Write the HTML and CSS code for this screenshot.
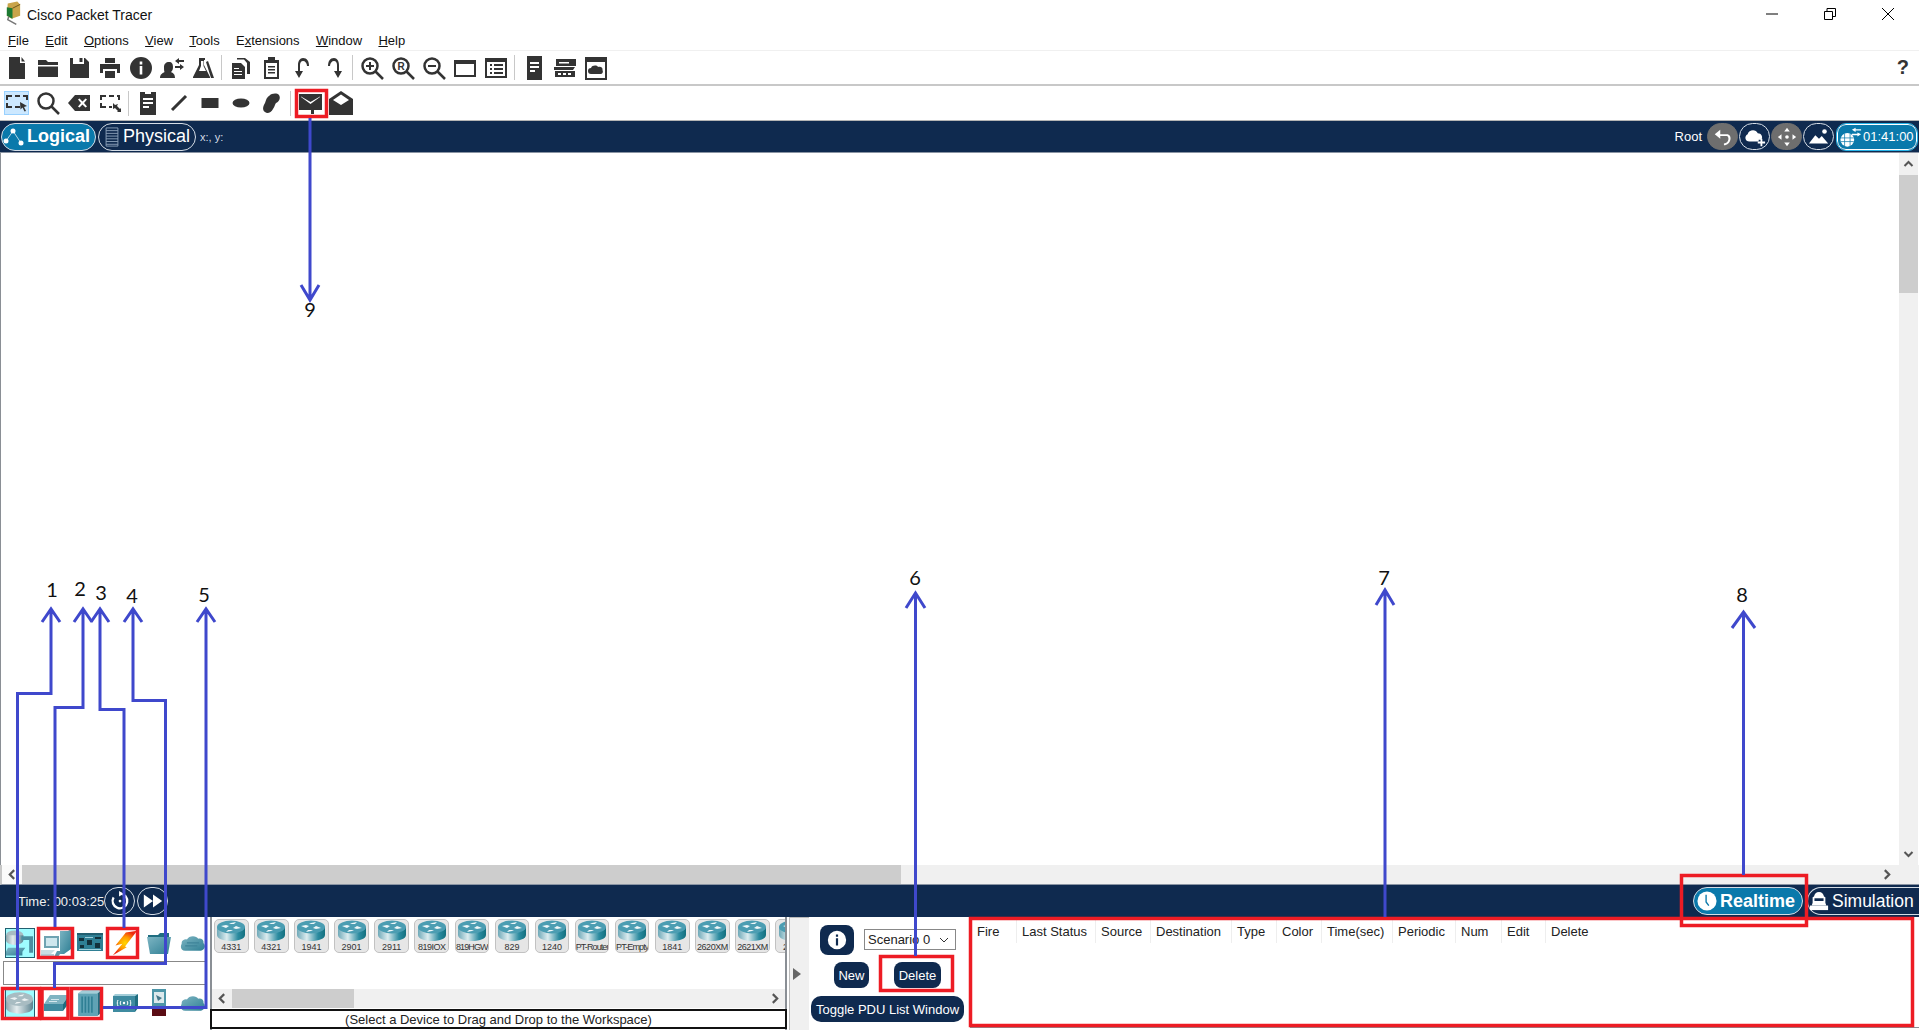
FILE: index.html
```html
<!DOCTYPE html>
<html lang="en">
<head>
    <meta charset="UTF-8">
    <title>Cisco Packet Tracer</title>
    <link rel="stylesheet" href="styles.css">
</head>
<body>
<svg class="defs" aria-hidden="true">
    <defs>
        <linearGradient id="rbody" x1="0" x2="1" y1="0" y2="0">
            <stop offset="0" stop-color="#6fa9b8"/>
            <stop offset=".35" stop-color="#dcecef"/>
            <stop offset=".75" stop-color="#2b8ba0"/>
            <stop offset="1" stop-color="#14707f"/>
        </linearGradient>
        <linearGradient id="rgrey" x1="0" x2="1" y1="0" y2="0">
            <stop offset="0" stop-color="#8fa6ad"/>
            <stop offset=".4" stop-color="#e4ecee"/>
            <stop offset="1" stop-color="#5d8390"/>
        </linearGradient>
        <linearGradient id="teal" x1="0" x2="1" y1="0" y2="1">
            <stop offset="0" stop-color="#7db5c3"/>
            <stop offset="1" stop-color="#2f7f94"/>
        </linearGradient>
        <radialGradient id="bolt">
            <stop offset="0" stop-color="#ffd800"/>
            <stop offset=".5" stop-color="#ff9a00"/>
            <stop offset="1" stop-color="#ee2a10"/>
        </radialGradient>
        <symbol id="i-doc" viewBox="0 0 24 24"><path d="M4 1h11v6h5v16H4z"/><path d="M16.500 1l3.500 4.500h-3.500z"/></symbol>
        <symbol id="i-folder" viewBox="0 0 24 24"><path d="M2 4h8l2 2h10v3H2zM2 10.500h20V21H2z"/></symbol>
        <symbol id="i-save" viewBox="0 0 24 24"><path d="M3 2h3v6h11V2h1l4 4v16H3z"/><path d="M12.500 2h3v4h-3z"/></symbol>
        <symbol id="i-print" viewBox="0 0 24 24"><path d="M7 2h10v5H7zM2 8h20v9h-3v-4H5v4H2zM7 15h10v7H7z"/></symbol>
        <symbol id="i-info" viewBox="0 0 24 24"><path fill-rule="evenodd" d="M12 1a11 11 0 1 1 0 22a11 11 0 0 1 0-22zM10.700 5.500v3h2.600v-3zM10.700 10v8.500h2.600V10z"/></symbol>
        <symbol id="i-user" viewBox="0 0 24 24"><path d="M9 6c3 0 4 2 4 5s-1 4-2 5c2 1 4 2 4 6H0c0-4 3-5 4.500-6C4 15 4 12 4 11c0-3 2-5 5-5z"/><path d="M15 5l4-3v2h5v2h-5v2zM24 11l-4-3v2h-5v2h5v2z"/></symbol>
        <symbol id="i-flask" viewBox="0 0 24 24"><path fill-rule="evenodd" d="M8 2h6v2h-1v5l6 12v1H2v-1L8 9V4zM10 5v5l-2 5h7l-2.500-5V5z"/><path d="M15 6l2-1 6 17h-3z"/></symbol>
        <symbol id="i-copy" viewBox="0 0 24 24"><path d="M8 3.500V2h8l5 4v12h-3V7l-3-3.500zM3 7h9l4 4v12H3zM5 12h5v1H5zM5 15h8v1H5zM5 18h8v1H5z" fill-rule="evenodd"/></symbol>
        <symbol id="i-paste" viewBox="0 0 24 24"><path fill-rule="evenodd" d="M8 1h7v3h4v19H4V4h4zM6 7v14h11V7zM8 10h7v1.500H8zM8 13h7v1.500H8zM8 16h7v1.500H8z"/></symbol>
        <symbol id="i-undo" viewBox="0 0 24 24"><path d="M16 10c0-3-2-5-4-5s-3 2-3 4v6h3l-4 7-4-7h3V9c0-4 2-7 5-7 4 0 6 3 6 8z"/></symbol>
        <symbol id="i-redo" viewBox="0 0 24 24"><path d="M8 10c0-3 2-5 4-5s3 2 3 4v6h-3l4 7 4-7h-3V9c0-4-2-7-5-7-4 0-6 3-6 8z"/></symbol>
        <symbol id="i-mag" viewBox="0 0 24 24"><circle cx="10" cy="10" r="7.500" fill="none" stroke="currentColor" stroke-width="2.500"/><path d="M15 15l8 8" stroke="currentColor" stroke-width="2.500"/></symbol>
        <symbol id="i-window" viewBox="0 0 24 24"><path fill-rule="evenodd" d="M1 4h22v17H1zM3 8v11h18V8z"/></symbol>
        <symbol id="i-list" viewBox="0 0 24 24"><path fill-rule="evenodd" d="M1 2h22v20H1zM3 6v14h18V6zM6 8h2v2H6zM10 8h9v2h-9zM6 12h2v2H6zM10 12h9v2h-9zM6 16h2v2H6zM10 16h9v2h-9z"/></symbol>
        <symbol id="i-server" viewBox="0 0 24 24"><path fill-rule="evenodd" d="M5 0h15v24H5zM8 6v2h9V6zM8 10v2h9v-2zM8 14v2h5v-2z"/></symbol>
        <symbol id="i-rack" viewBox="0 0 24 24"><path fill-rule="evenodd" d="M3 3h20v7H3zM6 6v1.500h10V6zM1 11h21l-2 3H1zM2 15h20v6H2zM5 17v2h3v-2zM10 17v2h3v-2zM15 17v2h3v-2z"/></symbol>
        <symbol id="i-cloudwin" viewBox="0 0 24 24"><path fill-rule="evenodd" d="M1 1h22v23H1zM3 6v16h18V6zM7 18a3 3 0 0 1 0-6c1-3 6-3 7-1 3-1 5 1 4.500 3 1 2 0 4-2 4z"/></symbol>
        <symbol id="i-marquee" viewBox="0 0 24 24"><path d="M1 4h6v2H1zM10 4h5v2h-5zM18 4h5v2h-5zM1 6h2v3H1zM21 6h2v3h-2zM1 12h2v3H1zM1 15h6v2H1zM10 15h5v2h-5z"/><path d="M15 11l7 4-3 1 2 4-1.500.500-2-4-2 2z"/></symbol>
        <symbol id="i-erase" viewBox="0 0 24 24"><path fill-rule="evenodd" d="M8 4h15v16H8l-7-8zM11 8.500l3 3.500-3 3.500 1.500 1 3-3 3 3 1.500-1-3-3.500 3-3.500-1.500-1-3 3-3-3z"/></symbol>
        <symbol id="i-resize" viewBox="0 0 24 24"><path d="M2 4h6v2H2zM11 4h5v2h-5zM19 4h3v5h-2V6h-1zM2 6h2v3H2zM2 12h2v3H2zM2 15h6v2H2zM11 15h3v2h-3z"/><path d="M15 12l2 2 3-1-1 2 3 3 1-1v4h-4l1-1-3-3-2 1z"/></symbol>
        <symbol id="i-note" viewBox="0 0 24 24"><path fill-rule="evenodd" d="M4 1h5v2h6V1h5v23H4zM7 7v2h10V7zM7 11v2h10v-2zM7 15v2h6v-2z"/></symbol>
        <symbol id="i-line" viewBox="0 0 24 24"><path d="M5 19L19 5" stroke="currentColor" stroke-width="3"/></symbol>
        <symbol id="i-rect" viewBox="0 0 24 24"><rect x="3.500" y="7" width="17" height="10"/></symbol>
        <symbol id="i-ellipse" viewBox="0 0 24 24"><ellipse cx="12" cy="12" rx="8.500" ry="4.500"/></symbol>
        <symbol id="i-pill" viewBox="0 0 24 24"><path d="M5 21c-3-2-2-6 0-9 1-2 1-5 4-7 3-3 8-3 10-1 2 3 0 7-3 8-1 1-1 3-3 6-2 4-6 5-8 3z"/></symbol>
        <symbol id="i-env" viewBox="0 0 24 24"><path fill-rule="evenodd" d="M1 3h23v16h-8v4h-3v-4H1zM3 6l9.500 7L22 6v-.500L12.500 11 3 5.500z"/></symbol>
        <symbol id="i-envopen" viewBox="0 0 24 24"><path fill-rule="evenodd" d="M12 0l12 8v16H0V8zM12 3.500L4 9l8 5 8-5z"/></symbol>
        <symbol id="i-router" viewBox="0 0 30 22">
            <path d="M1 7v8c0 3.500 6 6 14 6s14-2.500 14-6V7z" fill="url(#rbody)"/>
            <ellipse cx="15" cy="7" rx="14" ry="6.500" fill="#4b9db2"/>
            <path d="M5 6l5 2 3-2-3-1zM25 8l-5-2-3 2 3 1zM13 4l5 0 2-2-5 1zM17 10l-5 0-2 2 5-1z" fill="#eef7f9"/>
        </symbol>
        <symbol id="i-routergrey" viewBox="0 0 30 26">
            <path d="M1 9v9c0 3.500 6 6 14 6s14-2.500 14-6V9z" fill="url(#rgrey)"/>
            <ellipse cx="15" cy="9" rx="14" ry="7" fill="#a8bcc2"/>
            <path d="M5 8l5 2 3-2-3-1zM25 10l-5-2-3 2 3 1zM13 6l5 0 2-2-5 1zM17 12l-5 0-2 2 5-1z" fill="#eef3f4"/>
        </symbol>
        <symbol id="i-network" viewBox="0 0 30 30">
            <ellipse cx="10" cy="7" rx="9" ry="5" fill="#a8bcc2"/><path d="M1 7v5c0 3 4 5 9 5s9-2 9-5V7z" fill="url(#rgrey)"/>
            <path d="M17 8h12v17h-4V12H17z" fill="#4a8ea0"/>
            <path d="M3 20h18l-3 4H1zM1 24h17v4H1z" fill="url(#teal)"/>
        </symbol>
        <symbol id="i-pc" viewBox="0 0 32 30">
            <path d="M20 3h8l3-2v20l-7 5h-4z" fill="url(#teal)"/>
            <path d="M4 8h15v12H4z" fill="#6fa3b2"/><path d="M6 10h11v8H6z" fill="#cfe7ee"/>
            <path d="M1 22h14l-4 4H1z" fill="#c9dde2"/><path d="M1 26h13v2H1z" fill="#b0cdd5"/>
            <path d="M17 23h5l-4 6h-4z" fill="#5d9aab"/>
        </symbol>
        <symbol id="i-board" viewBox="0 0 26 20">
            <path d="M0 2h26v16H0z" fill="#2f7f94"/><path d="M0 0h26v2H0z" fill="#225f70"/>
            <path d="M10 7h5v5h-5zM2 5h5v3H2zM18 4h6v2h-6zM3 12h4v3H3zM18 10h5v5h-5z" fill="#12303a"/>
            <path d="M2 16h22v1H2zM8 4h8v1H8z" fill="#9fd0dc"/>
        </symbol>
        <symbol id="i-lightning" viewBox="0 0 30 30">
            <path d="M29 1L16 3 4 18l8-2L1 29l16-9-2-1z" fill="url(#bolt)"/>
        </symbol>
        <symbol id="i-fold" viewBox="0 0 26 24">
            <path d="M2 4h10l2-2h9v6H2z" fill="#1f6d80"/>
            <path d="M1 6h24l-3 17H4z" fill="url(#teal)"/>
        </symbol>
        <symbol id="i-cloudtext" viewBox="0 0 30 20">
            <path d="M6 19C1 19 0 14 2 11 1 7 6 5 8 6c2-5 11-5 13-1 4-1 7 2 6 5 4 4 0 9-4 9z" fill="url(#teal)"/>
            <path d="M8 9h14v1.500H8zM6 12.500h14V14H6z" fill="#3f8499"/>
        </symbol>
        <symbol id="i-switch" viewBox="0 0 26 18">
            <path d="M7 1h19l-6 9H1z" fill="#7fb4c2"/><path d="M1 10h19v7H1z" fill="#3f8ba0"/><path d="M20 10l6-9v8l-6 8z" fill="#1f6d80"/>
            <path d="M8 5h8v1H8zM6 7h8v1H6z" fill="#d4e8ee"/>
        </symbol>
        <symbol id="i-hub" viewBox="0 0 24 26">
            <path d="M1 4h18v21H1z" fill="#5fa3b5"/><path d="M1 4l4-3h18l-4 3z" fill="#a3cdd8"/><path d="M19 4l4-3v20l-4 4z" fill="#1f6d80"/>
            <path d="M4 7h1.500v15H4zM7 7h1.500v15H7zM10 7h1.500v15H10zM13 7h1.500v15H13z" fill="#2f7f94"/>
        </symbol>
        <symbol id="i-wireless" viewBox="0 0 26 20">
            <path d="M1 3h22v16H1z" fill="#3f8ba0"/><path d="M1 3l2-2h23l-3 2z" fill="#a3cdd8"/><path d="M23 3l3-2v14l-3 4z" fill="#1f6d80"/>
            <path d="M6 7c-1 2-1 4 0 6M9 8c-1 1-1 3 0 4M15 8c1 1 1 3 0 4M18 7c1 2 1 4 0 6" fill="none" stroke="#fff"/><circle cx="12" cy="10" r="1.200" fill="#fff"/>
        </symbol>
        <symbol id="i-phone" viewBox="0 0 16 30">
            <path d="M1 1h14v20H1z" fill="#4d96a8"/><path d="M3 4h10v11H3z" fill="#dce9ec"/><path d="M5 7l6 3-4 3z" fill="#46788a"/>
            <path d="M1 21h14v7H1z" fill="#5a0c14"/>
        </symbol>
        <symbol id="i-cloud" viewBox="0 0 30 20">
            <path d="M6 19C1 19 0 14 2 11 1 7 6 5 8 6c2-5 11-5 13-1 4-1 7 2 6 5 4 4 0 9-4 9z" fill="url(#teal)"/>
        </symbol>
    </defs>
</svg>

<header class="titlebar">
    <svg class="app-icon" viewBox="0 0 20 24">
        <path d="M5 2l10-2 3 3v12l-9 3-5-3z" fill="#c9a44a"/>
        <path d="M4 6l6 1v11l-6-3z" fill="#1d7a32"/>
        <path d="M10 7l8-4" stroke="#6b5418" fill="none"/>
        <path d="M6 16l-1 3 9 5" stroke="#777" stroke-width="1.500" fill="none"/>
    </svg>
    <span class="app-title">Cisco Packet Tracer</span>
    <div class="win-controls">
        <svg viewBox="0 0 12 12"><path d="M0 6h12" stroke="#000" fill="none"/></svg>
        <svg viewBox="0 0 12 12"><path d="M.5 3.500h8v8h-8zM3 3.500V.5h8.500v8H8.500" stroke="#000" fill="none"/></svg>
        <svg viewBox="0 0 12 12"><path d="M0 0l12 12M12 0L0 12" stroke="#000" fill="none"/></svg>
    </div>
</header>

<nav class="menubar">
    <span><u>F</u>ile</span>
    <span><u>E</u>dit</span>
    <span><u>O</u>ptions</span>
    <span><u>V</u>iew</span>
    <span><u>T</u>ools</span>
    <span>E<u>x</u>tensions</span>
    <span><u>W</u>indow</span>
    <span><u>H</u>elp</span>
</nav>

<div class="toolbar toolbar-main">
    <span class="tool"><svg><use href="#i-doc"/></svg></span>
    <span class="tool"><svg><use href="#i-folder"/></svg></span>
    <span class="tool"><svg><use href="#i-save"/></svg></span>
    <span class="tool"><svg><use href="#i-print"/></svg></span>
    <span class="tool"><svg><use href="#i-info"/></svg></span>
    <span class="tool"><svg><use href="#i-user"/></svg></span>
    <span class="tool"><svg><use href="#i-flask"/></svg></span>
    <span class="sep"></span>
    <span class="tool"><svg><use href="#i-copy"/></svg></span>
    <span class="tool"><svg><use href="#i-paste"/></svg></span>
    <span class="tool"><svg><use href="#i-undo"/></svg></span>
    <span class="tool"><svg><use href="#i-redo"/></svg></span>
    <span class="sep"></span>
    <span class="tool"><svg viewBox="0 0 24 24"><use href="#i-mag"/><path d="M6 9h8v2H6zM9 6h2v8H9z"/></svg></span>
    <span class="tool"><svg viewBox="0 0 24 24"><use href="#i-mag"/><text x="10" y="14" class="mag-r">R</text></svg></span>
    <span class="tool"><svg viewBox="0 0 24 24"><use href="#i-mag"/><path d="M6 9h8v2H6z"/></svg></span>
    <span class="tool"><svg><use href="#i-window"/></svg></span>
    <span class="tool"><svg><use href="#i-list"/></svg></span>
    <span class="sep"></span>
    <span class="tool"><svg><use href="#i-server"/></svg></span>
    <span class="tool"><svg><use href="#i-rack"/></svg></span>
    <span class="tool"><svg><use href="#i-cloudwin"/></svg></span>
    <span class="help">?</span>
</div>

<div class="toolbar toolbar-draw">
    <span class="tool is-active"><svg><use href="#i-marquee"/></svg></span>
    <span class="tool"><svg><use href="#i-mag"/></svg></span>
    <span class="tool"><svg><use href="#i-erase"/></svg></span>
    <span class="tool"><svg><use href="#i-resize"/></svg></span>
    <span class="sep"></span>
    <span class="tool"><svg><use href="#i-note"/></svg></span>
    <span class="tool"><svg><use href="#i-line"/></svg></span>
    <span class="tool"><svg><use href="#i-rect"/></svg></span>
    <span class="tool"><svg><use href="#i-ellipse"/></svg></span>
    <span class="tool"><svg><use href="#i-pill"/></svg></span>
    <span class="sep"></span>
    <span class="tool"><svg><use href="#i-env"/></svg></span>
    <span class="tool"><svg><use href="#i-envopen"/></svg></span>
</div>

<div class="navbar">
    <span class="pill pill-blue tab-logical">
        <svg class="pill-icon" viewBox="0 0 22 20"><path d="M10 4L3 14M10 4l8 12" stroke="#fff" stroke-width=".7" fill="none"/><circle cx="10" cy="4" r="2.500" fill="#fff"/><circle cx="3" cy="14" r="2.500" fill="#fff"/><circle cx="18" cy="16" r="2.500" fill="#fff"/></svg>
        <b>Logical</b>
    </span>
    <span class="pill tab-physical">
        <svg class="pill-icon" viewBox="0 0 20 22"><path d="M3.500 1h13v20h-13zM3.500 4h13M3.500 7h13M3.500 10h13M3.500 13h13M3.500 16h13M3.500 19h13" stroke="#8fa5bd" fill="none"/></svg>
        Physical
    </span>
    <span class="coords">x:, y:</span>
    <span class="nav-right">
        <span class="root-label">Root</span>
        <span class="round round-grey"><svg viewBox="0 0 24 24"><path d="M9 4L3 9l6 5v-3h7c3 0 3 8-3 8v2c8 0 10-12 3-12H9z" fill="#fff"/></svg></span>
        <span class="round"><svg viewBox="0 0 24 24"><path d="M6 17c-5 0-6-6-2-8 1-5 9-6 11-1 4 0 6 4 4 7h-3v2z" fill="#fff"/><path d="M18 14h2v3h3v2h-3v3h-2v-3h-3v-2h3z" fill="#fff"/></svg></span>
        <span class="round round-grey"><svg viewBox="0 0 24 24"><path d="M12 2l3 4H9zM12 22l-3-4h6zM2 12l4-3v6zM22 12l-4 3V9z" fill="#fff"/><circle cx="12" cy="12" r="2" fill="#fff"/></svg></span>
        <span class="round"><svg viewBox="0 0 24 24"><path d="M1 19l7-9 4 4 3-3 7 8z" fill="#fff"/><circle cx="18" cy="6" r="2.500" fill="#fff"/></svg></span>
        <span class="clock">
            <svg viewBox="0 0 24 24"><circle cx="8" cy="15" r="7.500" fill="#fff"/><path d="M1 13h14M1 17h14M5 8v14M11 8v14" stroke="#0a79ab" stroke-width=".8" fill="none"/><path d="M13 4l4-2v1.500h6v1.500h-6v1.500zM23 9l-4-2v1.500h-6V10h6v1.500z" fill="#fff"/></svg>
            01:41:00
        </span>
    </span>
</div>

<main class="workspace">
    <div class="canvas"></div>
    <div class="vscroll">
        <svg class="chev" viewBox="0 0 10 10"><path d="M1 7l4-4 4 4"/></svg>
        <div class="vthumb"></div>
        <svg class="chev chev-end" viewBox="0 0 10 10"><path d="M1 3l4 4 4-4"/></svg>
    </div>
</main>

<div class="hscroll">
    <svg class="chev" viewBox="0 0 10 10"><path d="M7 1L3 5l4 4"/></svg>
    <div class="hthumb"></div>
    <svg class="chev chev-right" viewBox="0 0 10 10"><path d="M3 1l4 4-4 4"/></svg>
</div>

<div class="simbar">
    <span class="time-label">Time: 00:03:25</span>
    <span class="round"><svg viewBox="0 0 24 24"><path d="M12 4a8 8 0 1 1-7 4" stroke="#fff" stroke-width="2.500" fill="none"/><path d="M11 1l5 3-5 3z" fill="#fff"/><circle cx="12" cy="12" r="1.500" fill="#fff"/></svg></span>
    <span class="round"><svg viewBox="0 0 24 24"><path d="M2 5l10 7-10 7zM12 5l10 7-10 7z" fill="#fff"/></svg></span>
    <span class="mode-switch">
        <span class="pill pill-blue mode-realtime">
            <svg class="mode-icon" viewBox="0 0 22 22"><circle cx="11" cy="11" r="10.500" fill="#fff"/><path d="M10 4v8l3 4" stroke="#0a79ab" stroke-width="1.500" fill="none"/></svg>
            <b>Realtime</b>
        </span>
        <span class="pill mode-sim">
            <svg class="mode-icon" viewBox="0 0 22 22"><path d="M11 1c3 0 5 2 5.500 5L18 7v6l1 3H3l1-3V7l1.500-1C6 3 8 1 11 1z" fill="#fff"/><path d="M6 8h10v3H6z" fill="#0f2a4f"/><path d="M1 16h20v5H1z" fill="#fff"/></svg>
            Simulation
        </span>
    </span>
</div>

<section class="bottom">
    <div class="palette">
        <div class="palette-row">
            <span class="cat cat-on"><svg><use href="#i-network"/></svg></span>
            <span class="cat cat-wide"><svg><use href="#i-pc"/></svg></span>
            <span class="cat"><svg><use href="#i-board"/></svg></span>
            <span class="cat"><svg><use href="#i-lightning"/></svg></span>
            <span class="cat"><svg><use href="#i-fold"/></svg></span>
            <span class="cat"><svg><use href="#i-cloudtext"/></svg></span>
        </div>
        <div class="palette-input"></div>
        <div class="palette-row">
            <span class="cat cat-on"><svg><use href="#i-routergrey"/></svg></span>
            <span class="cat"><svg><use href="#i-switch"/></svg></span>
            <span class="cat"><svg><use href="#i-hub"/></svg></span>
            <span class="cat"><svg><use href="#i-wireless"/></svg></span>
            <span class="cat"><svg><use href="#i-phone"/></svg></span>
            <span class="cat"><svg><use href="#i-cloud"/></svg></span>
        </div>
    </div>

    <div class="devices">
        <div class="device-list">
            <span class="tile"><svg><use href="#i-router"/></svg>4331</span>
            <span class="tile"><svg><use href="#i-router"/></svg>4321</span>
            <span class="tile"><svg><use href="#i-router"/></svg>1941</span>
            <span class="tile"><svg><use href="#i-router"/></svg>2901</span>
            <span class="tile"><svg><use href="#i-router"/></svg>2911</span>
            <span class="tile tile-tight"><svg><use href="#i-router"/></svg>819IOX</span>
            <span class="tile tile-tighter"><svg><use href="#i-router"/></svg>819HGW</span>
            <span class="tile"><svg><use href="#i-router"/></svg>829</span>
            <span class="tile"><svg><use href="#i-router"/></svg>1240</span>
            <span class="tile tile-tighter"><svg><use href="#i-router"/></svg>PT-Router</span>
            <span class="tile tile-tighter"><svg><use href="#i-router"/></svg>PT-Empty</span>
            <span class="tile"><svg><use href="#i-router"/></svg>1841</span>
            <span class="tile tile-tight"><svg><use href="#i-router"/></svg>2620XM</span>
            <span class="tile tile-tight"><svg><use href="#i-router"/></svg>2621XM</span>
            <span class="tile"><svg><use href="#i-router"/></svg>2811</span>
        </div>
        <div class="device-scroll">
            <svg class="chev" viewBox="0 0 10 10"><path d="M7 1L3 5l4 4"/></svg>
            <div class="device-thumb"></div>
            <svg class="chev chev-right" viewBox="0 0 10 10"><path d="M3 1l4 4-4 4"/></svg>
        </div>
        <div class="device-hint">(Select a Device to Drag and Drop to the Workspace)</div>
    </div>

    <div class="splitter"><span class="splitter-arrow"></span></div>

    <div class="pdu-controls">
        <div class="pdu-top">
            <span class="info-btn"><svg viewBox="0 0 24 24"><path fill="#fff" fill-rule="evenodd" d="M12 2a10 10 0 1 1 0 20a10 10 0 0 1 0-20zM10.800 6v2.500h2.400V6zM10.800 10v8h2.400v-8z"/></svg></span>
            <span class="scenario">Scenario 0<svg viewBox="0 0 10 10"><path d="M1 3l4 4 4-4" fill="none" stroke="#333"/></svg></span>
        </div>
        <div class="pdu-actions">
            <span class="btn btn-new">New</span>
            <span class="btn btn-delete">Delete</span>
        </div>
        <span class="btn btn-toggle">Toggle PDU List Window</span>
    </div>

    <div class="pdu-list">
        <div class="pdu-head">
            <span class="col-fire">Fire</span>
            <span class="col-status">Last Status</span>
            <span class="col-source">Source</span>
            <span class="col-dest">Destination</span>
            <span class="col-type">Type</span>
            <span class="col-color">Color</span>
            <span class="col-time">Time(sec)</span>
            <span class="col-periodic">Periodic</span>
            <span class="col-num">Num</span>
            <span class="col-edit">Edit</span>
            <span>Delete</span>
        </div>
    </div>
</section>

<!-- annotations drawn on top of the screenshot -->
<svg class="notes" viewBox="0 0 1919 1030">
    <g class="red">
        <rect x="296.500" y="90.500" width="30" height="26"/>
        <rect x="38.500" y="928.500" width="34" height="29"/>
        <rect x="107.500" y="928.500" width="30" height="29"/>
        <rect x="2.500" y="988.500" width="37" height="30"/>
        <rect x="42" y="988.500" width="26" height="30"/>
        <rect x="71.500" y="988.500" width="30" height="30"/>
        <rect x="880.500" y="956.500" width="72" height="34"/>
        <rect x="1681.500" y="875.500" width="125" height="50"/>
        <rect x="970.500" y="918.500" width="942" height="107"/>
    </g>
    <g class="blue">
        <path d="M310 118V300M301 285l9 15 9-15"/>
        <path d="M17.500 990V693.500H51V610M42 622l9-13 9 13"/>
        <path d="M55 927V707.500H83V610M74 622l9-13 9 13"/>
        <path d="M124 928V709.500H100V610M91 622l9-13 9 13"/>
        <path d="M54.500 988V963.500H165.500V700.500H133V610M124 622l9-13 9 13"/>
        <path d="M103 1007.500H206V610M197 622l9-13 9 13"/>
        <path d="M915.500 956V593M906 608l9.500-15 9.500 15"/>
        <path d="M1385 917V590M1376 605l9-15 9 15"/>
        <path d="M1743.500 875V612M1732 628l11.500-16 11.500 16"/>
    </g>
    <g class="note-labels">
        <text x="52" y="597">1</text>
        <text x="80" y="596">2</text>
        <text x="101" y="600">3</text>
        <text x="132" y="603">4</text>
        <text x="204" y="602">5</text>
        <text x="915" y="585">6</text>
        <text x="1384" y="585">7</text>
        <text x="1742" y="602">8</text>
        <text x="310" y="317">9</text>
    </g>
</svg>
</body>
</html>
```
FILE: styles.css
```css
html, body {
    margin: 0;
    height: 1030px;
    overflow: hidden;
    background-color: #fff;
}
body {
    position: relative;
    display: flex;
    flex-direction: column;
    font-family: "Liberation Sans", Arial, sans-serif;
    font-size: 13px;
    color: #222;
}
.defs {
    display: block;
    width: 0;
    height: 0;
    flex: none;
}

/* window chrome */
.titlebar {
    flex: none;
    height: 30px;
    display: flex;
    align-items: center;
    padding-left: 3px;
}
.app-icon {
    width: 19px;
    height: 24px;
    margin-top: -4px;
}
.app-title {
    font-size: 14px;
    color: #111;
    margin-left: 5px;
}
.win-controls {
    margin-left: auto;
    display: flex;
    gap: 46px;
    padding-right: 25px;
    margin-top: -2px;
}
.win-controls svg {
    width: 12px;
    height: 12px;
}
.menubar {
    flex: none;
    height: 21px;
    box-sizing: border-box;
    display: flex;
    gap: 16.300px;
    padding: 3px 0 0 8px;
    border-bottom: 1px solid #f0f0f0;
    color: #111;
}

/* toolbars */
.toolbar {
    flex: none;
    display: flex;
    align-items: center;
    box-sizing: border-box;
    padding-left: 1px;
    color: #333;
    fill: currentColor;
}
.toolbar-main {
    height: 35px;
    border-bottom: 2px solid #c8c8c8;
}
.toolbar-draw {
    height: 34px;
}
.tool {
    width: 31px;
    height: 24px;
    display: flex;
    align-items: center;
    justify-content: center;
}
.tool svg {
    width: 24px;
    height: 24px;
}
.tool.is-active {
    width: 25px;
    margin: 0 3px;
    background-color: #cce8ff;
    outline: 1px solid #99d1ff;
    outline-offset: -1px;
}
.mag-r {
    font-family: "Liberation Sans", sans-serif;
    font-size: 10px;
    font-weight: bold;
    text-anchor: middle;
}
.sep {
    width: 1px;
    height: 25px;
    margin: 0 3px;
    background-color: #c8c8c8;
}
.help {
    margin-left: auto;
    margin-right: 10px;
    font-size: 20px;
    font-weight: bold;
    color: #333;
}

/* navy bars */
.navbar, .simbar {
    flex: none;
    display: flex;
    align-items: center;
    box-sizing: border-box;
    background-color: #0f2a4f;
    color: #fff;
}
.navbar {
    height: 33px;
    border-top: 1px solid #b5b5b5;
    border-bottom: 1px solid #8a94a3;
    padding-left: 1px;
}
.pill {
    display: inline-flex;
    align-items: center;
    height: 28px;
    box-sizing: border-box;
    border: 1px solid #d5dde6;
    border-radius: 14px;
    background-color: #0f2a4f;
    font-size: 18px;
    color: #fff;
    white-space: nowrap;
}
.pill-blue {
    background-color: #0a79ab;
}
.pill-icon {
    width: 22px;
    height: 20px;
    flex: none;
}
.tab-logical {
    width: 95px;
    padding-left: 1px;
    gap: 2px;
}
.tab-physical {
    width: 98px;
    margin-left: 2px;
    padding-left: 3px;
    gap: 1px;
}
.tab-physical .pill-icon {
    width: 20px;
}
.coords {
    margin-left: 4px;
    font-size: 11px;
    color: #d5dde6;
}
.nav-right {
    margin-left: auto;
    display: flex;
    align-items: center;
    gap: 1px;
}
.root-label {
    margin-right: 4px;
}
.round {
    width: 31px;
    height: 27px;
    box-sizing: border-box;
    border: 1px solid #d5dde6;
    border-radius: 14px;
    display: flex;
    align-items: center;
    justify-content: center;
}
.round svg {
    width: 22px;
    height: 22px;
}
.round-grey {
    background-color: #6e6e6e;
    border-color: #6e6e6e;
}
.clock {
    width: 80px;
    height: 26px;
    box-sizing: border-box;
    margin: 0 2px;
    background-color: #0a79ab;
    border: 1px solid #fff;
    outline: 1px solid #27b4e8;
    border-radius: 9px;
    display: flex;
    align-items: center;
    gap: 1px;
    font-size: 13px;
    padding-left: 2px;
}
.clock svg {
    width: 22px;
    height: 22px;
    flex: none;
}

/* workspace */
.workspace {
    flex: 1;
    min-height: 0;
    display: flex;
    border-left: 1px solid #8a8f95;
}
.canvas {
    flex: 1;
}
.vscroll {
    width: 19px;
    margin-right: 1px;
    background-color: #f0f0f0;
    display: flex;
    flex-direction: column;
}
.vthumb {
    height: 118px;
    background-color: #cdcdcd;
}
.chev {
    flex: none;
    width: 19px;
    height: 22px;
    padding: 6px 4px;
    box-sizing: border-box;
}
.chev path {
    fill: none;
    stroke: #555;
    stroke-width: 2;
}
.chev-end {
    margin-top: auto;
}
.chev-right {
    margin-left: auto;
    margin-right: 22px;
}
.hscroll {
    flex: none;
    height: 20px;
    box-sizing: border-box;
    display: flex;
    align-items: center;
    background-color: #f0f0f0;
    border-bottom: 1px solid #8a94a3;
    border-left: 2px solid #c8c8c8;
}
.hscroll .chev {
    width: 20px;
    height: 19px;
    padding: 4px;
}
.hscroll .chev:first-child {
    background-color: #fafafa;
}
.hthumb {
    width: 879px;
    height: 19px;
    background-color: #cdcdcd;
}
.simbar {
    height: 32px;
    padding-left: 18px;
    gap: 2px;
}
.time-label {
    width: 84px;
    white-space: nowrap;
    color: #f0f0f0;
}
.simbar > .round {
    height: 28px;
}
.mode-switch {
    margin-left: auto;
    display: flex;
    gap: 4px;
}
.mode-realtime {
    width: 110px;
    padding-left: 3px;
    gap: 3px;
}
.mode-sim {
    width: 112px;
    padding-left: 1px;
    gap: 3px;
    border-right: 0;
    border-radius: 14px 0 0 14px;
    font-size: 17.500px;
}
.mode-icon {
    width: 20px;
    height: 20px;
    flex: none;
}

/* bottom panel */
.bottom {
    flex: none;
    height: 113px;
    display: flex;
}
.palette {
    width: 210px;
    flex: none;
    padding-top: 11px;
    box-sizing: border-box;
}
.palette-row {
    display: flex;
    height: 32px;
    padding-left: 5px;
}
.cat {
    width: 34.500px;
    height: 30px;
    display: flex;
    align-items: center;
    justify-content: center;
}
.cat svg {
    width: 26px;
    height: 30px;
}
.cat-on {
    width: 30px;
    margin-right: 4.500px;
    background-color: #9ffcff;
    box-shadow: inset 0 0 0 1px #225f70;
}
.cat-on svg {
    width: 29px;
}
.cat-wide svg {
    width: 32px;
    flex: none;
}
.palette-input {
    height: 22px;
    margin: 1px 3px 3px 3px;
    border: 1px solid #888;
    border-right: 0;
}
.devices {
    width: 577px;
    flex: none;
    display: flex;
    flex-direction: column;
    box-sizing: border-box;
    border-left: 2px solid #8a8f95;
    border-right: 2px solid #8a8f95;
}
.device-list {
    height: 72px;
    flex: none;
    display: flex;
    gap: 5.600px;
    padding: 2px 0 0 2px;
    box-sizing: border-box;
    overflow: hidden;
}
.tile {
    flex: none;
    width: 34.500px;
    height: 34px;
    box-sizing: border-box;
    display: flex;
    flex-direction: column;
    align-items: center;
    background-color: #e6e6e6;
    border: 1px solid #c2c2c2;
    border-radius: 5px;
    font-size: 9px;
    line-height: 10px;
    color: #333;
    white-space: nowrap;
    overflow: hidden;
}
.tile svg {
    flex: none;
    width: 30px;
    height: 22px;
}
.tile-tight {
    letter-spacing: -.5px;
}
.tile-tighter {
    letter-spacing: -.9px;
}
.device-scroll {
    height: 19px;
    flex: none;
    display: flex;
    align-items: center;
    background-color: #f0f0f0;
}
.device-scroll .chev {
    width: 20px;
    height: 19px;
    padding: 4px;
}
.device-scroll .chev-right {
    margin-right: 0;
}
.device-thumb {
    width: 122px;
    height: 19px;
    background-color: #cdcdcd;
}
.device-hint {
    height: 20px;
    box-sizing: border-box;
    margin: 1px -2px 0 -2px;
    border: 2px solid #111;
    text-align: center;
    line-height: 18px;
    color: #222;
}
.splitter {
    width: 20px;
    flex: none;
    box-sizing: border-box;
    margin-left: 2px;
    background-color: #f0f0f0;
    border-top: 1px solid #bbb;
    border-left: 1px solid #bbb;
    display: flex;
    align-items: center;
    padding-left: 3px;
}
.splitter-arrow {
    width: 0;
    height: 0;
    border-left: 8px solid #666;
    border-top: 6px solid transparent;
    border-bottom: 6px solid transparent;
}
.pdu-controls {
    width: 161px;
    flex: none;
    box-sizing: border-box;
    padding: 7px 0 0 2px;
    display: flex;
    flex-direction: column;
}
.pdu-top {
    display: flex;
    align-items: center;
    height: 31px;
    padding-left: 9px;
}
.info-btn {
    width: 34px;
    height: 30px;
    background-color: #0f2a4f;
    border-radius: 8px;
    display: flex;
    align-items: center;
    justify-content: center;
}
.info-btn svg {
    width: 22px;
    height: 22px;
}
.scenario {
    width: 92px;
    height: 21px;
    box-sizing: border-box;
    margin-left: 10px;
    border: 1px solid #888;
    padding-left: 3px;
    display: flex;
    align-items: center;
    justify-content: space-between;
    color: #222;
}
.scenario svg {
    width: 10px;
    height: 10px;
    margin-right: 6px;
}
.pdu-actions {
    display: flex;
    margin: 7px 0 8px 23px;
    gap: 25px;
}
.btn {
    height: 26px;
    border-radius: 8px;
    background-color: #0f2a4f;
    color: #fff;
    display: flex;
    align-items: center;
    justify-content: center;
    white-space: nowrap;
}
.btn-new {
    width: 35px;
}
.btn-delete {
    width: 47px;
}
.btn-toggle {
    width: 153px;
    border-radius: 10px;
}
.pdu-list {
    flex: 1;
    box-sizing: border-box;
    margin-bottom: 2px;
    border-bottom: 1px solid #8a8f95;
}
.pdu-head {
    display: flex;
    height: 26px;
    color: #222;
    line-height: 29px;
}
.pdu-head span {
    box-sizing: border-box;
    padding-left: 5px;
    border-right: 1px solid #eee;
    white-space: nowrap;
}
.pdu-head span:first-child {
    padding-left: 7px;
}
.pdu-head span:last-child {
    border-right: 0;
}
.col-fire { width: 47px; }
.col-status { width: 79px; }
.col-source { width: 55px; }
.col-dest { width: 81px; }
.col-type { width: 45px; }
.col-color { width: 45px; }
.col-time { width: 71px; }
.col-periodic { width: 63px; }
.col-num { width: 46px; }
.col-edit { width: 44px; }

/* annotation overlay */
.notes {
    position: absolute;
    top: 0;
    left: 0;
    width: 1919px;
    height: 1030px;
    pointer-events: none;
}
.notes .red rect {
    fill: none;
    stroke: #ed1c24;
    stroke-width: 3.500;
}
.notes .blue path {
    fill: none;
    stroke: #3f48cc;
    stroke-width: 3;
}
.note-labels text {
    font-family: Lato, sans-serif;
    font-size: 20px;
    text-anchor: middle;
    fill: #111;
}
```
